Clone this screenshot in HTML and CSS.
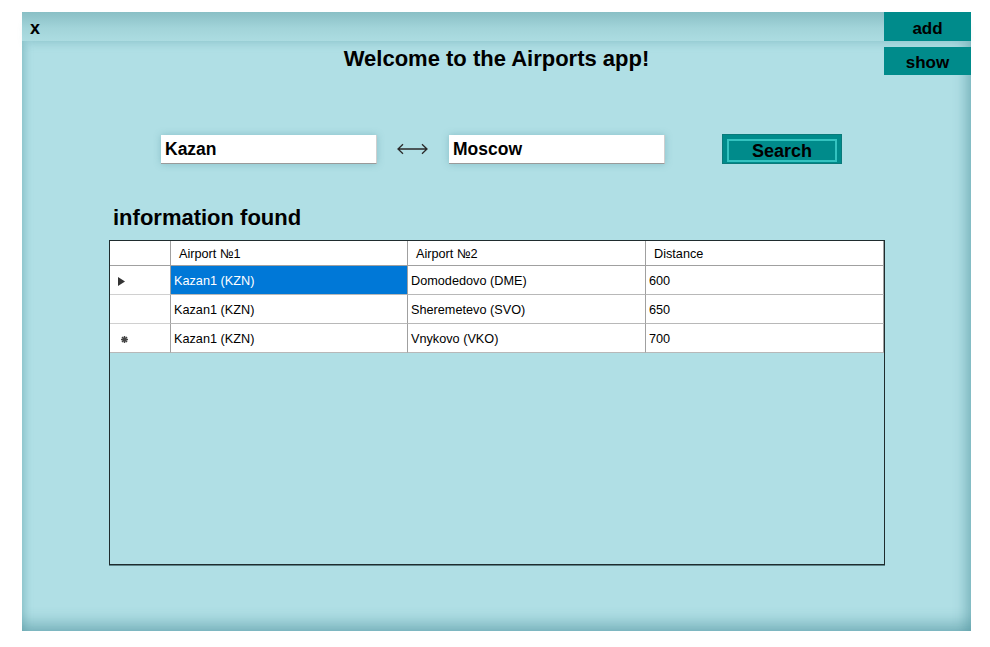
FILE: index.html
```html
<!DOCTYPE html>
<html lang="en">
<head>
<meta charset="utf-8">
<title>Airports</title>
<link rel="stylesheet" href="styles.css">
</head>
<body>
<div class="window">
  <div class="titlebar">
    <span class="close">x</span>
    <button class="btn btn-add">add</button>
  </div>
  <div class="head">
    <span class="spacer"></span>
    <h1 class="title">Welcome to the Airports app!</h1>
    <button class="btn btn-show">show</button>
  </div>
  <div class="search-row">
    <div class="field">Kazan</div>
    <svg class="swap" width="31" height="12" viewBox="0 0 31 12">
      <path d="M1 6 H30 M6 1.2 L1 6 L6 10.8 M25 1.2 L30 6 L25 10.8" fill="none" stroke="#2a2a2a" stroke-width="1.3"/>
    </svg>
    <div class="field">Moscow</div>
    <button class="search"><span class="search-inner">Search</span></button>
  </div>
  <h2 class="found">information found</h2>
  <div class="grid">
    <div class="row head-row">
      <div class="cell rh"></div>
      <div class="cell">Airport №1</div>
      <div class="cell">Airport №2</div>
      <div class="cell">Distance</div>
    </div>
    <div class="row data-row">
      <div class="cell rh"><svg width="7" height="9" viewBox="0 0 7 9"><polygon points="0,0 7,4.5 0,9" fill="#333"/></svg></div>
      <div class="cell selected">Kazan1 (KZN)</div>
      <div class="cell">Domodedovo (DME)</div>
      <div class="cell">600</div>
    </div>
    <div class="row data-row">
      <div class="cell rh"></div>
      <div class="cell">Kazan1 (KZN)</div>
      <div class="cell">Sheremetevo (SVO)</div>
      <div class="cell">650</div>
    </div>
    <div class="row data-row">
      <div class="cell rh star"><svg width="7" height="7" viewBox="0 0 7 7"><path d="M3.5 0 V7 M0 3.5 H7 M1 1 L6 6 M6 1 L1 6" stroke="#444" stroke-width="1.5"/></svg></div>
      <div class="cell">Kazan1 (KZN)</div>
      <div class="cell">Vnykovo (VKO)</div>
      <div class="cell">700</div>
    </div>
  </div>
</div>
</body>
</html>
```
FILE: styles.css
```css
html, body {
  margin: 0;
  padding: 0;
  background: #ffffff;
}

body {
  font-family: "Liberation Sans", Arial, sans-serif;
}

.window {
  margin: 12px 0 0 22px;
  width: 949px;
  height: 619px;
  background: #b0dfe5;
  box-shadow:
    inset 7px 0 8px -5px rgba(70, 140, 150, 0.4),
    inset -13px 0 12px -7px rgba(70, 140, 150, 0.45),
    inset 0 -18px 14px -9px rgba(70, 140, 150, 0.45);
  display: flex;
  flex-direction: column;
}

.titlebar {
  height: 29px;
  display: flex;
  justify-content: space-between;
  align-items: flex-start;
  background: linear-gradient(to bottom, #89bfc5 0%, #a2d4d9 55%, #acdce1 100%);
  box-shadow: 0 7px 9px -5px rgba(80, 150, 160, 0.35);
}

.close {
  margin-left: 8px;
  padding-top: 4px;
  font-size: 18px;
  font-weight: bold;
  line-height: 25px;
  color: #000;
}

.btn {
  width: 87px;
  border: none;
  margin: 0;
  background: #008b8b;
  color: #000;
  font-family: "Liberation Sans", Arial, sans-serif;
  font-weight: bold;
  font-size: 17px;
  padding: 3px 0 0;
  line-height: 25px;
  text-align: center;
}

.btn-add {
  height: 29px;
}

.btn-show {
  height: 28px;
  margin-top: 6px;
  justify-self: end;
}

.head {
  display: grid;
  grid-template-columns: 1fr auto 1fr;
  align-items: start;
}

.title {
  margin: 5px 0 0;
  font-size: 22px;
  line-height: 25px;
  font-weight: bold;
  color: #000;
  white-space: nowrap;
}

.search-row {
  margin-top: 59px;
  padding-left: 139px;
  display: flex;
  align-items: flex-start;
  height: 30px;
}

.field {
  box-sizing: border-box;
  width: 216px;
  height: 29px;
  margin-top: 1px;
  background: #fff;
  border-bottom: 1px solid #9a9a9a;
  border-right: 1px solid #cfcfcf;
  box-shadow: 0 0 7px rgba(60, 130, 140, 0.35);
  padding: 1px 0 0 4px;
  font-size: 17.5px;
  font-weight: bold;
  line-height: 27px;
  color: #000;
}

.swap {
  align-self: center;
  margin: 0 21px 0 20px;
}

.search {
  box-sizing: border-box;
  width: 120px;
  height: 30px;
  margin: 0 0 0 57px;
  background: #008b8b;
  border: 1px solid #0a7a7a;
  padding: 4px 4px 1px 4px;
  cursor: pointer;
}

.search-inner {
  display: block;
  box-sizing: border-box;
  height: 23px;
  border: 2px solid #34c3c0;
  padding-top: 1px;
  font-family: "Liberation Sans", Arial, sans-serif;
  font-size: 18px;
  font-weight: bold;
  line-height: 18px;
  color: #000;
  text-align: center;
}

.found {
  margin: 41px 0 0 91px;
  font-size: 22px;
  line-height: 25px;
  font-weight: bold;
  color: #000;
}

.grid {
  box-sizing: border-box;
  margin: 10px 0 0 87px;
  width: 776px;
  height: 325px;
  border: 1px solid #1f2c2e;
  box-shadow: 0 1px 0 #5d8388;
  font-size: 12.7px;
  color: #000;
}

.row {
  display: grid;
  grid-template-columns: 61px 237px 238px 238px;
  background: #fff;
}

.cell {
  box-sizing: border-box;
  border-right: 1px solid #a0a0a0;
  border-bottom: 1px solid #b8b8b8;
  white-space: nowrap;
  overflow: hidden;
}

.head-row .cell {
  height: 25px;
  line-height: 22px;
  padding: 2px 0 0 8px;
  border-bottom-color: #a0a0a0;
}

.data-row .cell {
  height: 29px;
  line-height: 26px;
  padding: 2px 0 0 3px;
}

.data-row .rh {
  display: flex;
  align-items: center;
  padding: 0 0 0 8px;
  border-bottom-color: #d0d0d0;
}

.data-row .rh svg {
  margin-top: 2px;
}

.data-row .rh.star {
  padding-left: 11px;
  border-bottom-color: #b8b8b8;
}

.selected {
  background: #0078d7;
  color: #fff;
}
```
